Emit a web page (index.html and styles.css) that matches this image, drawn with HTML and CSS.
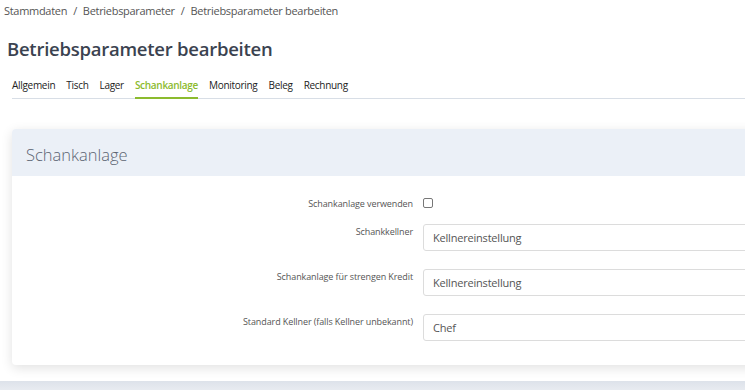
FILE: index.html
```html
<!DOCTYPE html>
<html lang="de">
<head>
    <meta charset="UTF-8">
    <title>Betriebsparameter bearbeiten</title>
    <link rel="stylesheet" href="styles.css">
</head>
<body>
    <div class="page">
        <div class="breadcrumb">
            <span>Stammdaten</span>
            <span class="sep">/</span>
            <span>Betriebsparameter</span>
            <span class="sep">/</span>
            <span>Betriebsparameter bearbeiten</span>
        </div>

        <h1 class="page-title">Betriebsparameter bearbeiten</h1>

        <ul class="tabs">
            <li class="tab">Allgemein</li>
            <li class="tab">Tisch</li>
            <li class="tab">Lager</li>
            <li class="tab active">Schankanlage</li>
            <li class="tab">Monitoring</li>
            <li class="tab">Beleg</li>
            <li class="tab">Rechnung</li>
        </ul>

        <div class="card">
            <div class="card-header">Schankanlage</div>
            <div class="card-body">
                <div class="form-row check-row">
                    <label class="form-label">Schankanlage verwenden</label>
                    <div class="form-field"><span class="checkbox"></span></div>
                </div>
                <div class="form-row">
                    <label class="form-label">Schankkellner</label>
                    <div class="form-field"><div class="select">Kellnereinstellung</div></div>
                </div>
                <div class="form-row">
                    <label class="form-label">Schankanlage für strengen Kredit</label>
                    <div class="form-field"><div class="select">Kellnereinstellung</div></div>
                </div>
                <div class="form-row">
                    <label class="form-label">Standard Kellner (falls Kellner unbekannt)</label>
                    <div class="form-field"><div class="select">Chef</div></div>
                </div>
            </div>
        </div>
    </div>
    <div class="next-section"></div>
</body>
</html>
```

FILE: styles.css
```css
* {
    box-sizing: border-box;
    margin: 0;
    padding: 0;
}

html, body {
    overflow: hidden;
}

body {
    width: 745px;
    height: 390px;
    font-family: 'Open Sans', sans-serif;
    color: #333;
    background: #fff;
}

.page {
    width: 1000px;
    padding: 0 0 16px 0;
}

.breadcrumb {
    display: flex;
    gap: 6px;
    padding: 3px 0 0 4px;
    font-size: 11px;
    letter-spacing: -0.3px;
    color: #555;
    height: 22px;
}

.page-title {
    font-size: 18.5px;
    font-weight: 600;
    letter-spacing: -0.25px;
    color: #3b4350;
    padding: 14px 0 0 7px;
    height: 49px;
}

.tabs {
    list-style: none;
    display: flex;
    gap: 11px;
    margin-left: 12px;
    border-bottom: 1px solid #d8dee6;
    height: 28px;
    font-size: 10px;
    letter-spacing: -0.3px;
}

.tab {
    color: #222;
    padding-top: 7px;
}

.tab.active {
    color: #8cbb2e;
    font-weight: 600;
    border-bottom: 2px solid #8cbb2e;
    height: 28px;
}

.card {
    margin: 30px 0 0 12px;
    background: #fff;
    border-radius: 4px;
    box-shadow: 0 3px 12px rgba(0, 0, 0, 0.12);
    overflow: hidden;
}

.card-header {
    background: #ebf0f7;
    height: 47px;
    padding: 14px 0 0 14px;
    font-size: 16.5px;
    font-weight: 300;
    color: #5b6472;
}

.card-body {
    padding: 20px 0 24px 0;
}

.form-row {
    display: flex;
    margin-bottom: 18px;
}

.form-row:last-child {
    margin-bottom: 0;
}

.check-row {
    margin-bottom: 14px;
}

.form-label {
    width: 401px;
    text-align: right;
    font-size: 9px;
    letter-spacing: -0.1px;
    color: #555;
    padding-top: 1px;
}

.form-field {
    margin-left: 10px;
    flex: 1;
}

.checkbox {
    display: block;
    width: 10px;
    height: 10px;
    border: 1px solid #777;
    border-radius: 2px;
    margin-top: 2px;
}

.select {
    height: 27px;
    border: 1px solid #dcdcdc;
    border-radius: 3px;
    padding: 5px 0 0 9px;
    font-size: 11px;
    letter-spacing: -0.2px;
    color: #555;
}

.next-section {
    height: 20px;
    background: linear-gradient(#dde2ea, #f5f6f8);
}
```
